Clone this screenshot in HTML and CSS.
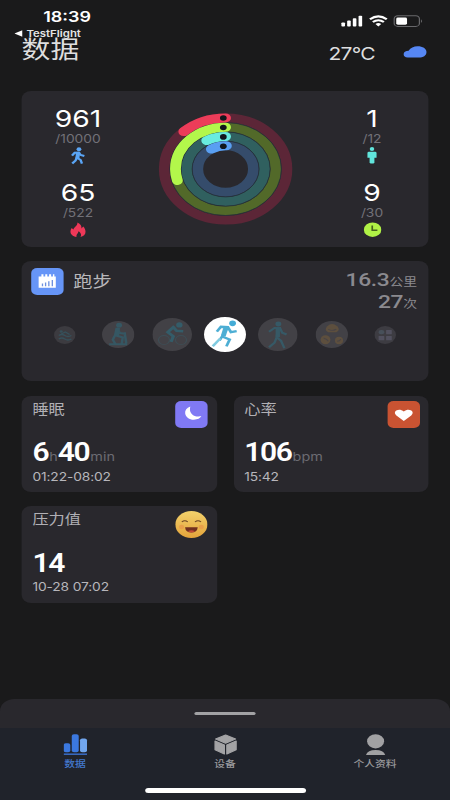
FILE: index.html
```html
<!DOCTYPE html>
<html lang="zh-CN">
<head>
<meta charset="utf-8">
<title>数据</title>
<link rel="stylesheet" href="styles.css">
</head>
<body>
<div class="screen">
  <header class="top">
    <div class="top-left">
      <div class="time">18:39</div>
      <div class="back"><svg width="7" height="7" viewBox="0 0 7 7"><path d="M0 3.5 6.6.3v6.4z" fill="#fff"/></svg><span>TestFlight</span></div>
      <h1>数据</h1>
    </div>
    <div class="top-right">
      <svg class="status" width="69" height="14" viewBox="0 0 69 14">
        <g fill="#fff">
          <rect x="0.5" y="8.5" width="3" height="4" rx=".8"/><rect x="5.3" y="6.6" width="3" height="5.9" rx=".8"/><rect x="10" y="4.2" width="3" height="8.3" rx=".8"/><rect x="14.8" y="1.8" width="3" height="10.7" rx=".8"/>
          <path d="M31.3 12.4 28.9 9.9q2.4-1.9 4.8 0z"/>
        </g>
        <path d="M24.3 5.2q7-5.6 14 0M26.7 8q4.6-3.5 9.2 0" fill="none" stroke="#fff" stroke-width="2.1"/>
        <rect x="44.5" y="1.8" width="21" height="10.6" rx="3" fill="none" stroke="#68686b"/>
        <rect x="46.2" y="3.5" width="9" height="7.2" rx="1.4" fill="#fff"/>
        <path d="M66.8 5.2q1.8 1.9 0 3.8z" fill="#68686b"/>
      </svg>
      <div class="weather"><span>27°C</span>
        <svg width="20" height="12" viewBox="0 0 20 12"><path d="M3.700 11.600C1.600 11.600.3 10.200.3 8.300c0-2.100 1.700-3.500 4.200-3.500C6 1.800 8.800.3 12 .3c4.300 0 7.400 2.300 7.400 5.700 0 3.600-2.700 5.600-6.400 5.600z" fill="#5687f4"/></svg>
      </div>
    </div>
  </header>

  <main>
    <section class="card summary">
      <div class="stats">
        <div class="stat"><b>961</b><span>/10000</span>
          <svg width="14" height="18" viewBox="0 0 14 18"><circle cx="7.800" cy="2.300" r="2" fill="#5aa5f5"/><path d="M2 8.700 4.200 5.800 7.700 5.500 9.200 8 12.300 9M6.800 6 6 10.600 9.200 13 10.300 16.600M5.800 10.800 5 13.500 2.200 16.500" fill="none" stroke="#5aa5f5" stroke-width="2"/><path d="M5.200 5h3.600l-.6 6.200H5z" fill="#5aa5f5"/></svg>
        </div>
        <div class="stat"><b>65</b><span>/522</span>
          <svg width="14" height="18" viewBox="0 0 14 18"><path d="M6.500 1.500C10 3.500 10 5.500 9.800 7.500l1.600-2C15 10.500 13 15.300 9 15.900c1.200-2 .4-4.200-1.600-5.600-.1 2.200-2.300 3.200-1.600 5.600C1.200 15.200-.6 10.800 1.700 7l1.500 1.500C3.500 6 6.800 4.800 6.500 1.500z" fill="#ee3858"/></svg>
        </div>
      </div>
      <svg class="rings" width="114" height="114" viewBox="-57 -57 114 114" fill="none">
        <g stroke-width="9">
          <circle r="51.100" stroke="#5c2637"/><circle r="41.800" stroke="#526929"/><circle r="32.500" stroke="#30605f"/><circle r="23.200" stroke="#354c6b"/>
        </g>
        <g stroke="#25303a" stroke-width=".7"><circle r="46.500"/><circle r="37.200"/><circle r="27.900"/></g>
        <g stroke-width="9" stroke-linecap="round" transform="matrix(0 -1 -1 0 0 0)">
          <circle r="51.100" pathLength="360" stroke-dasharray="43 317" stroke="#ec3c59"/>
          <circle r="41.800" pathLength="360" stroke-dasharray="106 254" stroke="#b3f74b"/>
          <circle r="32.500" pathLength="360" stroke-dasharray="29 331" stroke="#68ecdf"/>
          <circle r="23.200" pathLength="360" stroke-dasharray="31 329" stroke="#599ff2"/>
        </g>
        <g fill="#11171c"><circle cx="-1.900" cy="-51" r="2.800"/><circle cx="-1.900" cy="-41.500" r="2.800"/><circle cx="-1.900" cy="-32.100" r="2.800"/><circle cx="-1.900" cy="-22.700" r="2.800"/></g>
      </svg>
      <div class="stats">
        <div class="stat"><b>1</b><span>/12</span>
          <svg width="14" height="18" viewBox="0 0 14 18"><g fill="#61e5dc"><circle cx="7" cy="2" r="1.900"/><path d="M4.500 4.700h5q1.300 0 1.300 1.300v4.800H9V16q-2 1-4 0v-5.200H3.200V6q0-1.300 1.300-1.300z"/></g></svg>
        </div>
        <div class="stat"><b>9</b><span>/30</span>
          <svg width="15" height="18" viewBox="0 0 15 18"><circle cx="7.500" cy="8.700" r="7.300" fill="#b0f246"/><path d="M7.200 4.500v4.700h4.300" fill="none" stroke="#47631d" stroke-width="1.400"/></svg>
        </div>
      </div>
    </section>

    <section class="card sport">
      <div class="sport-head">
        <div class="badge blue"><svg width="27" height="27" viewBox="0 0 27 27"><path d="M6.200 8.500h2.300V6.300h1.700v2.200h1.500V6.300h1.700v2.200h1.500V6.300h1.700v2.200h1.500V6.300h1.200v2.200h1.200v11.200H6.200z" fill="#fff"/><path d="M9.400 15.500v2.700M12 14.500v3.700M14.700 13.300v4.900M17.600 12v6.200" stroke="#6e91df" stroke-width="1.100"/></svg></div>
        <h2>跑步</h2>
        <div class="totals"><div><b>16.3</b>公里</div><div><b>27</b>次</div></div>
      </div>
      <div class="carousel">
        <svg width="18" height="18" viewBox="0 0 36 36"><circle cx="18" cy="18" r="18" fill="#3c3b40"/><g stroke="#36505a" stroke-width="2.500" fill="none"><path d="M8 19q5-4 10 0t11 0M8 26q5-4 10 0t11 0M12 16l7-4 7 5"/></g><circle cx="12" cy="11" r="2.500" fill="#36505a"/></svg>
        <svg width="27" height="27" viewBox="0 0 36 36"><circle cx="18" cy="18" r="18" fill="#424146"/><g stroke="#355763" stroke-width="2.800" fill="none"><path d="M18 9l-3 10 8 3-1 8M14 20l-2 5 3 6M17 11l3 5 6 1M25 15l2 15M8 31h20"/></g><path d="M15 9h5l-1 11h-6z" fill="#355763"/><circle cx="19" cy="5.500" r="3.300" fill="#355763"/></svg>
        <svg width="33" height="33" viewBox="0 0 36 36"><circle cx="18" cy="18" r="18" fill="#424146"/><circle cx="10.500" cy="24" r="5" fill="none" stroke="#3d4e56" stroke-width="1"/><circle cx="26" cy="24" r="5" fill="none" stroke="#3d4e56" stroke-width="1"/><path d="M20 9l-6 6.500 5 4.500-2 6M19 10l3 4 6 .5" fill="none" stroke="#345c69" stroke-width="2.900"/><circle cx="24.500" cy="7.500" r="2.900" fill="#345c69"/></svg>
        <svg width="35" height="35" viewBox="0 0 36 36"><circle cx="18" cy="18" r="18" fill="#fff"/><g fill="none" stroke="#4daed4" stroke-width="2.400"><path d="M11 15l3.500-5 6 .5 2.500 5 5-1M20 11l-4.500 9 6.500 3.200-2.800 7M15.500 20l-2.200 4"/><path d="M14 22l-6.500 8" stroke="#80cbe0"/></g><path d="M17 9.500h4.500L18.500 20l-4-1z" fill="#4daed4"/><circle cx="24.500" cy="6.500" r="2.900" fill="#45acd6"/></svg>
        <svg width="33" height="33" viewBox="0 0 36 36"><circle cx="18" cy="18" r="18" fill="#424146"/><g fill="none" stroke="#365966" stroke-width="2.200"><path d="M10 15l5-4 5 0 2 5 4 2M18 12l-1 9 4 4 3 8M17 21l-2 6-5 5"/></g><path d="M16 10h4v11h-4z" fill="#365966"/><circle cx="18.500" cy="6.500" r="2.700" fill="#365966"/></svg>
        <svg width="27" height="27" viewBox="0 0 36 36"><circle cx="18" cy="18" r="18" fill="#424146"/><g fill="#5d4f3e"><path d="M13 7q5-6 11 0 4 5-1 8H14q-5-3-1-8z"/><ellipse cx="11" cy="25" rx="5.500" ry="6"/><ellipse cx="26" cy="26" rx="4.500" ry="5"/></g><path d="M14 11q4 3 9 0M9 23q4 1 5 4M24 27q3 0 4-3" stroke="#484447" stroke-width="1.200" fill="none"/></svg>
        <svg width="18" height="18" viewBox="0 0 36 36"><circle cx="18" cy="18" r="18" fill="#3d3c42"/><g fill="#51505e"><rect x="7" y="8" width="9.500" height="8.500" rx="4" fill="#47505a"/><rect x="19.500" y="8" width="9.500" height="8.500" rx="1"/><rect x="7" y="20" width="9.500" height="8.500" rx="1"/><rect x="19.500" y="20" width="9.500" height="8.500" rx="1"/></g></svg>
      </div>
    </section>

    <div class="metrics">
      <section class="card metric">
        <div class="metric-head"><h3>睡眠</h3><div class="badge violet"><svg width="27" height="27" viewBox="0 0 27 27"><path d="M12.600 5.400C9.500 6.600 8 9.300 8.300 12.200c.5 4 3.600 6.600 7.300 6.500 3 0 5.300-1.400 6.200-3.600-5 1.500-11-1.800-9.200-9.700z" fill="#fff"/></svg></div></div>
        <div class="value"><b>6</b>h<b>40</b>min</div>
        <div class="when">01:22-08:02</div>
      </section>
      <section class="card metric">
        <div class="metric-head"><h3>心率</h3><div class="badge orange"><svg width="27" height="27" viewBox="0 0 27 27"><path d="M13.500 20 7.300 14.400C3.500 10.500 9.400 6.300 13.500 10.500c4.100-4.200 10 0 6.200 3.900z" fill="#fff"/></svg></div></div>
        <div class="value"><b>106</b>bpm</div>
        <div class="when">15:42</div>
      </section>
      <section class="card metric">
        <div class="metric-head"><h3>压力值</h3><svg width="27" height="27" viewBox="0 0 27 27"><defs><linearGradient id="face" x2="0" y2="1"><stop stop-color="#f2d16b"/><stop offset="1" stop-color="#e4a43b"/></linearGradient></defs><circle cx="13.500" cy="13.500" r="13.400" fill="url(#face)"/><circle cx="5.300" cy="16" r="2.200" fill="#e9a04a"/><circle cx="21.700" cy="16" r="2.200" fill="#e9a04a"/><path d="M5.500 11q2.500-2.600 5 0M16.500 11q2.500-2.600 5 0" stroke="#6b4423" fill="none" stroke-width="1"/><path d="M8.200 16.300h10.600q-.5 5.300-5.300 5.300t-5.300-5.300z" fill="#71301f"/><path d="M10.500 20.300q3-2 6 0-3 2.200-6 0z" fill="#c44a38"/></svg></div>
        <div class="value"><b>14</b></div>
        <div class="when">10-28 07:02</div>
      </section>
    </div>
  </main>

  <footer>
    <div class="sheet"><i class="grabber"></i></div>
    <nav>
      <div class="tab active">
        <svg width="20" height="22" viewBox="0 0 20 22"><rect x="0" y="9.200" width="5.600" height="9" rx="1.800" fill="#3b78df"/><rect x="6.800" y=".3" width="5.800" height="17.900" rx="1.800" fill="#3b78df"/><rect x="13.700" y="4.500" width="5.800" height="13.700" rx="1.800" fill="#71a6ee"/><rect y="19.400" width="19.500" height="1.600" fill="#3768bd"/></svg>
        <span>数据</span>
      </div>
      <div class="tab">
        <svg width="20" height="22" viewBox="0 0 20 22"><g fill="#a3a3a5" stroke="#a3a3a5" stroke-linejoin="round"><path d="M10 1 18.300 5 10 9.200 1.700 5z"/><path d="M1.200 7 9 11v9L1.200 15.800z"/><path d="M18.800 7 11 11v9l7.800-4.200z"/></g></svg>
        <span>设备</span>
      </div>
      <div class="tab">
        <svg width="20" height="22" viewBox="0 0 20 22"><circle cx="10" cy="7.300" r="7.100" fill="#a1a1a3"/><path d="M2 21q1.300-5 8-5t8 5z" fill="#a1a1a3"/></svg>
        <span>个人资料</span>
      </div>
    </nav>
    <i class="home"></i>
  </footer>
</div>
</body>
</html>
```
FILE: styles.css
```css
* { box-sizing: border-box; margin: 0; padding: 0; }

html, body { background: #1a1a1b; overflow: hidden; }

/* The 375px phone layout is widened to fill the 450px window. */
.screen {
  width: 375px;
  height: 800px;
  display: flex;
  flex-direction: column;
  overflow: hidden;
  transform: scaleX(1.2);
  transform-origin: 0 0;
  background: #1a1a1b;
  color: #fff;
  font-family: Inter, "Noto Sans CJK SC", sans-serif;
}

svg { display: block; flex: none; }
b, h1, h2, h3 { font-weight: 400; }

.top { height: 91px; display: flex; justify-content: space-between; flex: none; }
.top-left { padding: 8px 0 0 18px; }
.time { padding-left: 18px; font-size: 15px; line-height: 17px; font-weight: 600; }
.back { display: flex; align-items: center; gap: 3.5px; margin: 2px 0 0 -6.5px; height: 12px; font-size: 9.5px; font-weight: 600; color: #e4e4e4; }
h1 { margin-top: -1px; font-size: 24px; line-height: 24px; color: #dededf; }
.top-right { padding: 14px 19px 0 0; display: flex; flex-direction: column; align-items: flex-end; }
.status { margin-right: 3.5px; }
.weather { display: flex; align-items: center; gap: 23.5px; margin-top: 15px; height: 20px; font-size: 17.5px; letter-spacing: -.6px; color: #dededf; }
.weather svg { margin-top: -2px; }

main { flex: 1; display: flex; flex-direction: column; gap: 14px; padding: 0 18px; }
.card { background: #29282d; border-radius: 8px; }

.summary { height: 156px; display: flex; justify-content: space-between; align-items: center; padding: 0 7px; }
.stats { width: 80px; height: 156px; padding-top: 15px; }
.stat { height: 73.5px; display: flex; flex-direction: column; align-items: center; }
.stat b { font-size: 23.5px; line-height: 25px; }
.stat span { font-size: 11.5px; line-height: 16px; color: #727178; }

.sport { height: 120px; padding: 7px 9.5px 0 7.5px; }
.sport-head { display: flex; height: 43px; }
.badge { width: 27px; height: 27px; border-radius: 5px; flex: none; }
.blue { background: #6695f7; }
.violet { background: #8079f4; }
.orange { background: #c95332; }
h2 { margin-left: 8.5px; font-size: 16px; line-height: 27px; color: #b8b7bb; }
.totals { margin-left: auto; padding-top: 1px; text-align: right; font-size: 11.5px; line-height: 22px; color: #8b8a8f; }
.totals b { font-family: Roboto, sans-serif; font-size: 19px; font-weight: 500; letter-spacing: -.3px; }
.totals div { height: 22px; }
.carousel { display: grid; grid-template-columns: repeat(7, 44.4px); justify-content: center; align-items: center; justify-items: center; height: 47px; margin: 0 -9.5px 0 -7.5px; }

.metrics { display: grid; grid-template-columns: 162.5px 162.5px; grid-auto-rows: 96.5px; gap: 14px; padding-top: .5px; }
.metric { padding: 5px 7.5px 0 9px; }
.metric-head { display: flex; justify-content: space-between; height: 38.5px; }
h3 { font-size: 13.5px; line-height: 17px; color: #b1b0b5; }
.value { height: 27px; line-height: 27px; font-size: 12px; color: #6c6b72; }
.value b { font-family: Roboto, sans-serif; font-size: 25px; font-weight: 600; letter-spacing: -1.1px; margin-right: .8px; color: #fff; }
.when { margin-top: 2.5px; font-size: 11.5px; line-height: 16px; letter-spacing: -.1px; color: #b7b6bb; }

footer { height: 101px; display: flex; flex-direction: column; flex: none; background: #20232b; }
.sheet { height: 29px; display: flex; justify-content: center; padding-top: 12.5px; background: #29282d; border-radius: 12px 12px 0 0; box-shadow: 0 -8px 0 8px #1a1a1b; clip-path: inset(0); }
.grabber { width: 51px; height: 3.5px; border-radius: 2px; background: #a2a2a4; }
nav { display: grid; grid-template-columns: repeat(3, 1fr); height: 60px; padding-top: 6px; }
.tab { display: flex; flex-direction: column; align-items: center; font-size: 9px; font-weight: 500; color: #98989b; }
.tab span { line-height: 14px; margin-top: 1px; }
.active { color: #4378cd; }
.home { width: 134px; height: 5px; border-radius: 3px; background: #fff; align-self: center; }
```
